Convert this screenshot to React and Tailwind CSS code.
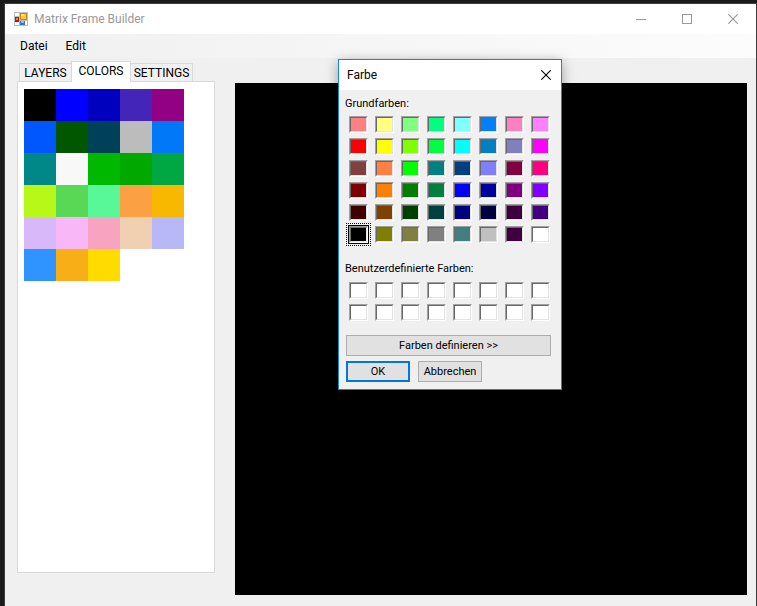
import React, { useState } from "react";

const palette = [
  "#000000", "#0000ff", "#0000bf", "#4326b9", "#920084",
  "#0057fb", "#005700", "#00415a", "#bcbcbc", "#0078f8",
  "#008888", "#f8f8f8", "#00b800", "#00a800", "#00a844",
  "#b8f818", "#58d854", "#58f898", "#fca044", "#f8b800",
  "#d8b8f8", "#f8b8f8", "#f8a4c0", "#f0d0b0", "#b8b8f8",
  "#2f94ff", "#f7ae17", "#ffdb00",
];

const basicColors = [
  "#ff8080", "#ffff80", "#80ff80", "#00ff80", "#80ffff", "#0080ff", "#ff80c0", "#ff80ff",
  "#ff0000", "#ffff00", "#80ff00", "#00ff40", "#00ffff", "#0080c0", "#8080c0", "#ff00ff",
  "#804040", "#ff8040", "#00ff00", "#008080", "#004080", "#8080ff", "#800040", "#ff0080",
  "#800000", "#ff8000", "#008000", "#008040", "#0000ff", "#0000a0", "#800080", "#8000ff",
  "#400000", "#804000", "#004000", "#004040", "#000080", "#000040", "#400040", "#400080",
  "#000000", "#808000", "#808040", "#808080", "#408080", "#c0c0c0", "#400040", "#ffffff",
];

const customColors = Array.from({ length: 16 }, () => "#ffffff");

function Well({ color, selected, onClick }) {
  return (
    <button
      type="button"
      aria-label={color}
      onClick={onClick}
      className="relative block h-[17px] w-[19px] border border-t-[#a0a0a0] border-r-white border-b-white border-l-[#a0a0a0]"
    >
      <span
        className="block h-[15px] w-[17px] border border-t-[#696969] border-r-[#e3e3e3] border-b-[#e3e3e3] border-l-[#696969]"
        style={{ backgroundColor: color }}
      />
      {selected && (
        <>
          <span className="absolute -inset-[2px] border border-black" />
          <span className="absolute -inset-[4px] border border-dotted border-black" />
        </>
      )}
    </button>
  );
}

function AppIcon() {
  return (
    <svg width="14" height="14" viewBox="0 0 14 14" shapeRendering="crispEdges" aria-hidden="true">
      <rect width="14" height="14" fill="#bdbdbd" />
      <rect x="1" y="1" width="4" height="3" fill="#fff" />
      <rect x="1" y="10" width="4" height="3" fill="#fff" />
      <rect x="11" y="9" width="2" height="4" fill="#fff" />
      <rect x="6" y="1" width="7" height="7" fill="#c58a10" />
      <rect x="7" y="2" width="5" height="5" fill="#f9c934" />
      <rect x="7" y="2" width="3" height="2" fill="#ffe58a" />
      <rect x="1" y="5" width="4" height="5" fill="#a51d12" />
      <rect x="2" y="6" width="2" height="2" fill="#ef7d6d" />
      <rect x="6" y="9" width="5" height="4" fill="#3a6fc9" />
      <rect x="7" y="9" width="3" height="2" fill="#8db9f5" />
    </svg>
  );
}

function Cross() {
  return (
    <svg width="10" height="10" viewBox="0 0 10 10" fill="none" stroke="currentColor" aria-hidden="true">
      <path d="M0.3 0.3 9.7 9.7M9.7 0.3 0.3 9.7" strokeWidth="1.1" />
    </svg>
  );
}

function ColorDialog() {
  const [selected, setSelected] = useState(40);
  return (
    <section
      role="dialog"
      aria-labelledby="dialog-title"
      className="absolute top-[59px] left-[338px] w-[224px] border border-[#1883d7] bg-[#f0f0f0] pb-[7px] text-[11px] leading-4 shadow-[0_3px_12px_rgba(0,0,0,0.35)]"
    >
      <header className="flex h-[30px] items-center justify-between bg-white pr-[10px] pl-2">
        <h2 id="dialog-title" className="text-xs">Farbe</h2>
        <button type="button" aria-label="Schließen"><Cross /></button>
      </header>
      <div className="px-[7px] pt-[6px]">
        <h3 className="-ml-px">Grundfarben:</h3>
        <div className="mt-1 grid grid-cols-[repeat(8,19px)] gap-x-[7px] gap-y-[5px] pl-[3px]">
          {basicColors.map((c, i) => (
            <Well key={i} color={c} selected={i === selected} onClick={() => setSelected(i)} />
          ))}
        </div>
        <h3 className="-ml-px mt-[18px]">Benutzerdefinierte Farben:</h3>
        <div className="mt-[5px] grid grid-cols-[repeat(8,19px)] gap-x-[7px] gap-y-[5px] pl-[3px]">
          {customColors.map((c, i) => (
            <Well key={i} color={c} />
          ))}
        </div>
        <button type="button" className="mt-[14px] block h-[21px] w-[205px] border border-[#adadad] bg-[#e1e1e1]">
          Farben definieren &gt;&gt;
        </button>
        <div className="mt-[5px] flex gap-2">
          <button type="button" className="flex h-[21px] w-16 items-center justify-center border-2 border-[#0078d7] bg-[#e1e1e1]">
            OK
          </button>
          <button type="button" className="flex h-[21px] w-16 items-center justify-center border border-[#adadad] bg-[#e1e1e1]">
            Abbrechen
          </button>
        </div>
      </div>
    </section>
  );
}

export default function App() {
  return (
    <div className="relative flex min-h-screen flex-col border-t-[3px] border-l-4 border-[#1b1b1b] bg-[#f0f0f0] font-[Roboto,sans-serif] text-xs text-black">
      <div className="flex flex-1 flex-col border-t border-r border-l border-[#3c3c3c]">
        <header className="flex h-[30px] items-center bg-white pr-[18px] pl-[9px] text-[#999999]">
          <AppIcon />
          <h1 className="ml-[6px] flex-1">Matrix Frame Builder</h1>
          <div className="flex items-center gap-9">
            <button type="button" aria-label="Minimieren" className="flex h-[11px] w-[10px] items-center">
              <span className="h-px w-full bg-[#999999]" />
            </button>
            <button type="button" aria-label="Maximieren" className="h-[10px] w-[10px] border border-[#999999]" />
            <button type="button" aria-label="Schließen"><Cross /></button>
          </div>
        </header>
        <nav className="flex h-6 items-center gap-[18px] bg-linear-to-r from-[#f0f0f0] to-[#fcfcfc] pl-[15px]">
          <button type="button">Datei</button>
          <button type="button">Edit</button>
        </nav>
        <main className="flex flex-1 items-start gap-5 pt-[3px] pr-[9px] pb-[11px] pl-3">
          <aside className="w-[198px] shrink-0">
            <div role="tablist" className="flex items-end pl-[2px]">
              <button role="tab" type="button" className="h-[18px] w-[52px] border-t border-l border-[#d9d9d9] leading-4">
                LAYERS
              </button>
              <button role="tab" type="button" aria-selected="true" className="z-10 -mb-px h-[21px] w-[60px] border border-b-0 border-[#d9d9d9] bg-white pb-[3px] leading-4">
                COLORS
              </button>
              <button role="tab" type="button" className="h-[18px] w-[62px] border-t border-r border-[#d9d9d9] leading-4">
                SETTINGS
              </button>
            </div>
            <div className="grid h-[492px] grid-cols-[repeat(5,32px)] content-start border border-[#d9d9d9] bg-white pt-[7px] pl-[6px]">
              {palette.map((c, i) => (
                <button key={i} type="button" aria-label={c} className="h-8 w-8" style={{ backgroundColor: c }} />
              ))}
            </div>
          </aside>
          <div className="mt-[22px] h-[512px] flex-1 bg-black" />
        </main>
      </div>
      <div className="absolute -top-[3px] -left-1">
        <ColorDialog />
      </div>
    </div>
  );
}
